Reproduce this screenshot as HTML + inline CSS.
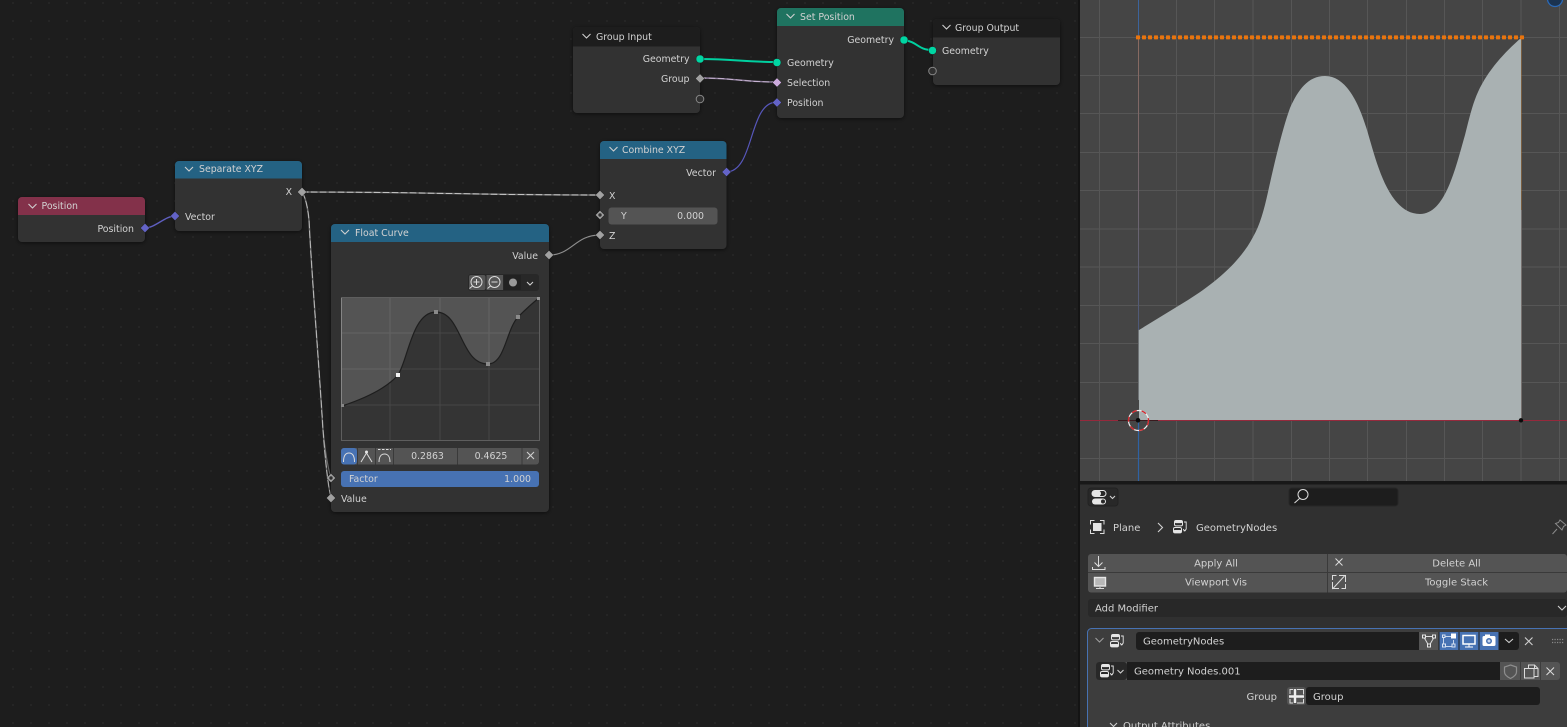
<!DOCTYPE html>
<html><head><meta charset="utf-8"><title>Geometry Nodes</title>
<style>
html,body{margin:0;padding:0;background:#1d1d1d;overflow:hidden;width:1567px;height:727px}
svg{display:block}
text{font-family:"DejaVu Sans","Liberation Sans",sans-serif;font-size:9.4px;fill:#d2d2d2}
.p text{font-size:10px}
.e{text-anchor:end}.m{text-anchor:middle}
.c{fill:none;stroke:#d0d0d0;stroke-width:1.1}
.i{fill:none;stroke:#dcdcdc;stroke-width:1}
.f{fill:#e6e6e6}
</style></head><body>
<svg xmlns="http://www.w3.org/2000/svg" width="1567" height="727" viewBox="0 0 1567 727">
<defs>
<pattern id="dots" x="12" y="2" width="18" height="18" patternUnits="userSpaceOnUse"><rect width="2" height="2" fill="#252525"/></pattern>
<pattern id="org" x="1135.500" y="35" width="6" height="6" patternUnits="userSpaceOnUse"><rect x=".5" y=".4" width="4" height="4" rx=".7" fill="#e8740e"/></pattern>
<linearGradient id="lv" x1="0" y1="37" x2="0" y2="330" gradientUnits="userSpaceOnUse"><stop offset="0" stop-color="#8a6a60"/><stop offset=".6" stop-color="#6f6670"/><stop offset="1" stop-color="#4c5878"/></linearGradient>
<filter id="sh" x="-10%" y="-10%" width="120%" height="120%"><feDropShadow dx="0" dy="1" stdDeviation="2.2" flood-color="#000" flood-opacity=".55"/></filter>
<symbol id="gn" viewBox="0 0 14 14" overflow="visible">
<rect x="1.500" y=".5" width="8" height="5.400" rx="1.500" fill="none" stroke="#e6e6e6"/><rect x="1.500" y=".5" width="8" height="2.600" rx="1.200" fill="#e6e6e6"/>
<rect x=".5" y="7.500" width="8" height="5.400" rx="1.500" fill="none" stroke="#e6e6e6"/><rect x=".5" y="10" width="8" height="3" rx="1.200" fill="#e6e6e6"/>
<path d="M11 2h2.200v7.200l-2 1.600M10.400 9l.8 2 1.600-.4" fill="none" stroke="#e6e6e6" stroke-width=".9"/>
</symbol>
</defs>

<!-- node editor -->
<rect width="1080" height="727" fill="#1d1d1d"/>
<rect width="1080" height="727" fill="url(#dots)"/>

<!-- links behind nodes -->
<g fill="none" stroke-linecap="round">
<path d="M145 228C155 228 165 216 175 216" stroke="#5f5fc0" stroke-width="1.400"/>
<path d="M302 192C420 192 480 195 600 195" stroke="#6a6a6a" stroke-width="1.500"/>
<path d="M302 192C420 192 480 195 600 195" stroke="#cfcfcf" stroke-width=".9" stroke-dasharray="6 3"/>
<path d="M302 192C306 198 308 210 309 220C312 280 318 350 323 430C325 450 328 468 331 478" stroke="#6a6a6a" stroke-width="1.200"/>
<path d="M302 192C306 198 308 210 309 220C312 280 318 350 323 430C325 455 327 480 331 498" stroke="#6a6a6a" stroke-width="1.400"/>
<path d="M302 192C306 198 308 210 309 220C312 280 318 350 323 430C325 455 327 480 331 498" stroke="#c8c8c8" stroke-width=".8" stroke-dasharray="7 3"/>
<path d="M549 255C572 255 575 235 600 235" stroke="#8e8e8e" stroke-width="1.200"/>
<path d="M726 172C755 172 748 102 777 102" stroke="#5757bb" stroke-width="1.200"/>
<path d="M700 59C735 59 742 62 777 62" stroke="#00d0a0" stroke-width="2"/>
<path d="M700 78C735 78 742 82 777 82" stroke="#8a7a98" stroke-width="1.400"/>
<path d="M700 78C735 78 742 82 777 82" stroke="#d4c0de" stroke-width=".8" stroke-dasharray="6 3"/>
<path d="M904 40C918 42 918 50 932 50" stroke="#00d0a0" stroke-width="2"/>
</g>

<!-- Position -->
<g filter="url(#sh)"><rect x="18" y="197" width="127" height="45" rx="4" fill="#303030"/></g>
<path d="M18 215v-14a4 4 0 0 1 4-4h119a4 4 0 0 1 4 4v14z" fill="#83314a"/>
<polyline class="c" points="28.500,204 32.500,208 36.500,204"/>
<text x="41.500" y="209">Position</text>
<text class="e" x="134" y="232">Position</text>

<!-- Separate XYZ -->
<g filter="url(#sh)"><rect x="175" y="161" width="127" height="70" rx="4" fill="#303030"/></g>
<path d="M175 178.500v-13.500a4 4 0 0 1 4-4h119a4 4 0 0 1 4 4v13.500z" fill="#246283"/>
<polyline class="c" points="185,167 189,171 193,167"/>
<text x="199" y="172">Separate XYZ</text>
<text class="e" x="292" y="195">X</text>
<text x="185" y="220">Vector</text>

<!-- Float Curve -->
<g filter="url(#sh)"><rect x="331" y="224" width="218" height="288" rx="4" fill="#303030"/></g>
<path d="M331 242v-14a4 4 0 0 1 4-4h210a4 4 0 0 1 4 4v14z" fill="#246283"/>
<polyline class="c" points="341,230 345,234 349,230"/>
<text x="355" y="236">Float Curve</text>
<text class="e" x="538" y="259">Value</text>

<rect x="468" y="274" width="71" height="17" rx="3" fill="#282828"/>
<rect x="469" y="275" width="16.500" height="15" rx="2" fill="#555"/>
<rect x="486.500" y="275" width="16.500" height="15" fill="#555"/>
<rect x="504" y="275" width="17" height="15" fill="#222"/>
<circle cx="476.500" cy="282" r="5.500" class="i"/><path class="i" d="M473.500 282h6M476.500 279v6M472.500 286l-3 2.500"/>
<circle cx="494.500" cy="282" r="5.500" class="i"/><path class="i" d="M491.500 282h6M490.500 286l-3 2.500"/>
<circle cx="513" cy="282.500" r="4" fill="#9a9a9a"/>
<polyline class="c" points="527,282 530,285 533,282"/>

<!-- graph -->
<rect x="341" y="297" width="199" height="144" fill="#343434"/>
<path d="M342 406C360 400 385 390 398 375C408 360 412 312 436 312C462 312 460 364 488 364C505 364 506 330 518 317C525 310 530 305 539 298V298H342Z" fill="#545454"/>
<path d="M390 298V440M440 298V440M489 298V440M342 333H539M342 369H539M342 405H539" stroke="#fff" stroke-opacity=".09" fill="none"/>
<path d="M342 406C360 400 385 390 398 375C408 360 412 312 436 312C462 312 460 364 488 364C505 364 506 330 518 317C525 310 530 305 539 298" fill="none" stroke="#1e1e1e" stroke-width="1.200"/>
<rect x="341.500" y="297.500" width="198" height="143" fill="none" stroke="#5e5e5e"/>
<path d="M341.500 298V406" stroke="#858585"/>
<rect x="341" y="404" width="3" height="3" fill="#888"/><rect x="396" y="373" width="4" height="4" fill="#f2f2f2"/>
<rect x="434" y="310" width="4" height="4" fill="#8a8a8a"/><rect x="486" y="362" width="4" height="4" fill="#8a8a8a"/>
<rect x="516" y="315" width="4" height="4" fill="#8a8a8a"/><rect x="537" y="297" width="3" height="3" fill="#999"/>

<!-- handles -->
<rect x="341" y="448" width="198" height="16.500" rx="3" fill="#545454"/>
<rect x="341" y="448" width="16" height="16.500" rx="3" fill="#4772b3"/>
<path d="M357.500 448v16.500M375.500 448v16.500M393.500 448v16.500M457.500 448v16.500M522 448v16.500" stroke="#3a3a3a"/>
<path class="i" d="M343.500 462c0-6 2-9 5.500-9s5.500 3 5.500 9"/>
<path class="i" d="M361 462l5.500-9 5.500 9"/><circle cx="366.500" cy="452" r="1.500" class="f"/>
<path class="i" d="M379 462c0-5 2-8 5.500-8s5.500 3 5.500 8"/><path class="i" d="M378 449.500h13" stroke-dasharray="2.500 1.500"/>
<text class="m" x="427.500" y="459">0.2863</text>
<text class="m" x="491" y="459">0.4625</text>
<path d="M527 452l7 7M534 452l-7 7" stroke="#cfcfcf" stroke-width="1.100"/>

<rect x="341" y="471" width="198" height="16" rx="3" fill="#4772b3"/>
<text x="349" y="482">Factor</text>
<text class="e" x="531" y="482">1.000</text>
<text x="341" y="502">Value</text>

<!-- Combine XYZ -->
<g filter="url(#sh)"><rect x="600" y="141" width="126.500" height="108" rx="4" fill="#303030"/></g>
<path d="M600 159v-14a4 4 0 0 1 4-4h118.500a4 4 0 0 1 4 4v14z" fill="#246283"/>
<polyline class="c" points="609.500,147 613.500,151 617.500,147"/>
<text x="622" y="153">Combine XYZ</text>
<text class="e" x="716" y="176">Vector</text>
<text x="609" y="199">X</text>
<rect x="608.500" y="207.500" width="109" height="17" rx="3" fill="#545454"/>
<text x="621" y="219">Y</text>
<text class="e" x="704" y="219">0.000</text>
<text x="609" y="239">Z</text>

<!-- Group Input -->
<g filter="url(#sh)"><rect x="573" y="27" width="127" height="86" rx="4" fill="#303030"/></g>
<path d="M573 46.500v-15.500a4 4 0 0 1 4-4h119a4 4 0 0 1 4 4v15.500z" fill="#1d1d1d"/>
<polyline class="c" points="582.500,34 586.500,38 590.500,34"/>
<text x="596" y="40">Group Input</text>
<text class="e" x="689.500" y="62">Geometry</text>
<text class="e" x="689.500" y="82">Group</text>

<!-- Set Position -->
<g filter="url(#sh)"><rect x="777" y="8" width="127" height="110" rx="4" fill="#303030"/></g>
<path d="M777 26v-14a4 4 0 0 1 4-4h119a4 4 0 0 1 4 4v14z" fill="#1f7360"/>
<polyline class="c" points="786.500,14 790.500,18 794.500,14"/>
<text x="800" y="20">Set Position</text>
<text class="e" x="894" y="43">Geometry</text>
<text x="787" y="66">Geometry</text>
<text x="787" y="86">Selection</text>
<text x="787" y="106">Position</text>

<!-- Group Output -->
<g filter="url(#sh)"><rect x="933" y="19" width="127" height="66" rx="4" fill="#303030"/></g>
<path d="M933 37.500v-14.500a4 4 0 0 1 4-4h119a4 4 0 0 1 4 4v14.500z" fill="#1d1d1d"/>
<polyline class="c" points="942.500,25 946.500,29 950.500,25"/>
<text x="955" y="31">Group Output</text>
<text x="942" y="54">Geometry</text>

<!-- sockets -->
<g stroke="#222" stroke-width=".5">
<polygon points="145,223.400 149.600,228 145,232.600 140.400,228" fill="#6363c7"/>
<polygon points="175,211.400 179.600,216 175,220.600 170.400,216" fill="#6363c7"/>
<polygon points="302,187.400 306.600,192 302,196.600 297.400,192" fill="#a1a1a1"/>
<polygon points="549,250.400 553.600,255 549,259.600 544.400,255" fill="#a1a1a1"/>
<polygon points="331,473.400 335.600,478 331,482.600 326.400,478" fill="#a1a1a1"/>
<polygon points="331,493.400 335.600,498 331,502.600 326.400,498" fill="#a1a1a1"/>
<polygon points="600,190.400 604.600,195 600,199.600 595.400,195" fill="#a1a1a1"/>
<polygon points="600,210.400 604.600,215 600,219.600 595.400,215" fill="#a1a1a1"/>
<polygon points="600,230.400 604.600,235 600,239.600 595.400,235" fill="#a1a1a1"/>
<polygon points="726.500,167.400 731.100,172 726.500,176.600 721.900,172" fill="#6363c7"/>
<polygon points="700,73.900 704.600,78.500 700,83.100 695.400,78.500" fill="#a1a1a1"/>
<polygon points="777,77.900 781.600,82.500 777,87.100 772.400,82.500" fill="#ccaadd"/>
<polygon points="777,97.900 781.600,102.500 777,107.100 772.400,102.500" fill="#6363c7"/>
<circle cx="700" cy="59" r="4" fill="#00d6a3"/>
<circle cx="777" cy="62.500" r="4" fill="#00d6a3"/>
<circle cx="904" cy="40" r="4" fill="#00d6a3"/>
<circle cx="932.500" cy="50.500" r="4" fill="#00d6a3"/>
</g>
<circle cx="331" cy="478" r="1.700" fill="#303030"/><circle cx="600" cy="215" r="1.700" fill="#303030"/>
<circle cx="700" cy="99" r="3.800" fill="#303030" stroke="#888" stroke-width="1"/>
<circle cx="932.500" cy="71" r="3.800" fill="#303030" stroke="#888" stroke-width="1"/>

<!-- viewport -->
<rect x="1078" y="0" width="2" height="727" fill="#141414"/>
<rect x="1080" y="0" width="487" height="481" fill="#454545"/>
<path d="M1099.500 0V481M1176.500 0V481M1214.500 0V481M1253 0V481M1291.500 0V481M1329.500 0V481M1367.500 0V481M1406.500 0V481M1444.500 0V481M1482.500 0V481M1521 0V481M1559.500 0V481M1080 37.500H1567M1080 75.500H1567M1080 113.500H1567M1080 152.500H1567M1080 190.500H1567M1080 229H1567M1080 267H1567M1080 305.500H1567M1080 343.500H1567M1080 382.500H1567M1080 458.500H1567" stroke="#565656" fill="none"/>
<path d="M1138.500 0V37" stroke="#3c649c" fill="none"/>
<rect x="1138" y="37" width="1" height="293" fill="url(#lv)"/>
<path d="M1138.500 420V481" stroke="#2f62a4" stroke-width="1.200" fill="none"/>
<path d="M1521 37V210" stroke="#b0763a" fill="none"/>
<path d="M1080 420.500H1567" stroke="#96293c" fill="none"/>
<path d="M1139 330L1188 300C1215 283 1240 262 1253 237C1260 225 1264 210 1268 192C1274 165 1282 130 1290 108C1298 90 1308 76 1325 76C1345 76 1358 100 1367 130C1376 160 1388 214 1420 214C1445 214 1455 170 1465 135C1470 115 1473 103 1478 92C1488 70 1505 52 1521 38V420H1139Z" fill="#a9b1b2"/>
<path d="M1138.500 330V400" stroke="#6f7376" fill="none"/>
<path d="M1521.500 210V420" stroke="#76706e" fill="none"/>
<rect x="1135.500" y="35" width="390" height="5" fill="url(#org)"/>
<path d="M1118 420.500H1158" stroke="#3a1a1e" fill="none"/>
<circle cx="1138.500" cy="420.500" r="10" fill="none" stroke="#f0f0f0" stroke-width="1.200"/>
<circle cx="1138.500" cy="420.500" r="10" fill="none" stroke="#d8232a" stroke-width="1.300" stroke-dasharray="5 5"/>
<circle cx="1138" cy="420.300" r="2.300" fill="#0a0a0a"/>
<circle cx="1521" cy="420.300" r="2.200" fill="#0a0a0a"/>
<circle cx="1555" cy="-1" r="7.500" fill="#1b3350" stroke="#2b6ab8" stroke-width="1.200"/>

<!-- properties -->
<g class="p">
<rect x="1080" y="481" width="487" height="246" fill="#303030"/>
<rect x="1080" y="481" width="487" height="3.500" fill="#181818"/>
<rect x="1088" y="488" width="30" height="18" rx="3" fill="#282828" stroke="#222"/>
<rect x="1092" y="490.500" width="14" height="6" rx="3" fill="none" stroke="#e6e6e6"/><rect x="1092" y="490.500" width="9" height="6" rx="3" fill="#e6e6e6"/>
<rect x="1092" y="498.500" width="14" height="6" rx="3" fill="#e6e6e6"/><rect x="1101" y="499.500" width="4" height="4" rx="2" fill="#282828"/>
<polyline class="c" points="1110,496 1112.500,498.500 1115,496"/>
<rect x="1289" y="488" width="109" height="18" rx="3" fill="#1d1d1d" stroke="#262626"/>
<circle cx="1303" cy="494.500" r="5" class="i"/><path class="i" d="M1299.500 498.500l-5 4.500"/>

<path class="i" stroke="#bbb" d="M1090.500 524.500v-4h4M1100 520.500h4v4M1104 529.500v4h-4M1094.500 533.500h-4v-4"/>
<rect x="1093" y="523" width="8.500" height="8" fill="#e6e6e6"/>
<text x="1113" y="531">Plane</text>
<polyline class="c" points="1158,523 1162.500,527.500 1158,532"/>
<use href="#gn" x="1173" y="520" width="14" height="14"/>
<text x="1196" y="531">GeometryNodes</text>
<path d="M1552.500 534l4.500-5M1560 520l6 5-2.500 1.500-1.500 3.500-6.500-6.500 3-1z" fill="none" stroke="#8a8a8a"/>

<rect x="1088" y="554" width="479" height="38.500" rx="3" fill="#545454"/>
<path d="M1088 572.500H1567" stroke="#3a3a3a"/>
<path d="M1327.500 554V592.500" stroke="#3a3a3a"/>
<path class="i" d="M1098.500 556v10M1094.500 562.500l4 4 4-4M1092.500 567v2.500h12.500V567"/>
<text class="m" x="1216" y="566.500">Apply All</text>
<path class="i" d="M1335.500 558.500l7 7M1342.500 558.500l-7 7"/>
<text class="m" x="1456.500" y="566.500">Delete All</text>
<rect x="1094.500" y="577.500" width="11" height="8.500" fill="#b8b8b8" stroke="#e6e6e6" stroke-width="1.400"/>
<path class="i" d="M1100 587v1.500M1096 588.500h8"/>
<text class="m" x="1216" y="585.500">Viewport Vis</text>
<path class="i" d="M1332.500 589l12-13M1339 575.500h6.500v6.500M1332.500 582v6.500h6.500M1345.500 584v4.500h-4M1332.500 580v-4.500h4"/>
<text class="m" x="1456.500" y="585.500">Toggle Stack</text>

<rect x="1088" y="599" width="479" height="18" rx="3" fill="#282828"/>
<text x="1095" y="611.500">Add Modifier</text>
<polyline class="c" points="1558,606 1562,610 1566,606"/>

<!-- modifier panel -->
<rect x="1087.500" y="628.500" width="490" height="110" rx="4" fill="#3d3d3d" stroke="#4772b3"/>
<polyline fill="none" stroke="#a0a0a0" stroke-width="1" points="1095.500,638 1099.500,642 1103.500,638"/>
<use href="#gn" x="1110" y="634" width="14" height="14"/>
<rect x="1136" y="632" width="383" height="18" rx="3" fill="#1d1d1d"/>
<text x="1143" y="644.500">GeometryNodes</text>
<rect x="1419" y="632" width="19.500" height="18" fill="#545454"/>
<rect x="1439.500" y="632" width="19" height="18" fill="#4772b3"/>
<rect x="1459.500" y="632" width="19" height="18" fill="#4772b3"/>
<rect x="1479.500" y="632" width="19" height="18" fill="#4772b3"/>
<path class="i" d="M1423.500 636.500h11l-5.500 9.500z"/>
<rect x="1422.500" y="635" width="3" height="3" fill="#545454" stroke="#e6e6e6"/><rect x="1432.500" y="635" width="3" height="3" fill="#545454" stroke="#e6e6e6"/><rect x="1427.500" y="644" width="3" height="3" fill="#545454" stroke="#e6e6e6"/>
<path d="M1444 636.500h7M1443.500 637v8M1453.500 640v5M1445 646.500h7" stroke="#c8d6ec" fill="none"/>
<rect x="1451" y="633.500" width="5" height="5" fill="#fff"/>
<rect x="1442.500" y="635" width="2.500" height="2.500" fill="#4772b3" stroke="#d8e2f2"/>
<rect x="1442.500" y="644" width="3" height="3" fill="#4772b3" stroke="#d8e2f2"/><rect x="1452" y="644" width="3" height="3" fill="#4772b3" stroke="#d8e2f2"/>
<rect x="1463" y="635.500" width="12" height="8.500" fill="#4772b3" stroke="#fff" stroke-width="1.500"/>
<path d="M1469 644.500v2M1465 647h8" stroke="#fff"/>
<rect x="1482.500" y="636" width="13" height="10" rx="1.500" fill="#fff"/><rect x="1485" y="634.500" width="5" height="2" fill="#fff"/>
<circle cx="1489" cy="641" r="3.300" fill="#4772b3" stroke="#fff" stroke-width=".6"/><circle cx="1489" cy="641" r="1.500" fill="#c4d4ee"/>
<polyline class="c" points="1505,639 1509,642.500 1513,639"/>
<path d="M1525 637.500l7.500 7.500M1532.500 637.500l-7.500 7.500" stroke="#d0d0d0" stroke-width="1.100"/>
<path d="M1552 639.500h12M1552 642.500h12" stroke="#8a8a8a" stroke-dasharray="1.200 1.300" stroke-width="1.200"/>

<rect x="1096" y="662" width="464" height="18" rx="3" fill="#545454"/>
<rect x="1096" y="662" width="31" height="18" rx="3" fill="#282828"/>
<use href="#gn" x="1100" y="664" width="14" height="14"/>
<polyline class="c" points="1117.500,670 1120.500,673 1123.500,670"/>
<rect x="1127" y="662" width="373" height="18" fill="#1d1d1d"/>
<text x="1134" y="674.500">Geometry Nodes.001</text>
<path d="M1520.500 662V680M1540.500 662V680" stroke="#3d3d3d"/>
<path d="M1510.500 665l6 2v5c0 3-3 5-6 6.500-3-1.500-6-3.500-6-6.500v-5z" fill="none" stroke="#8e8e8e" stroke-width="1.200"/>
<path class="i" d="M1528.500 668.500v-3.500h6l3.500 3.500v8h-4M1524.500 668.500h9.500v9.500h-9.500zM1534.500 665v3.500h3.500"/>
<path class="i" d="M1546.500 667.500l7.500 7.500M1554 667.500l-7.500 7.500"/>

<text class="e" x="1277" y="700">Group</text>
<rect x="1287" y="687" width="19" height="18" rx="3" fill="#545454"/>
<rect x="1306" y="687" width="234" height="18" rx="3" fill="#1d1d1d"/>
<path d="M1295 689v14M1289 696.500h15" stroke="#f0f0f0" stroke-width="2.400"/>
<path d="M1290 694v-4.500h3M1297 689.500h6.500v5M1290 699v4h3M1297 703h6.500v-4" fill="none" stroke="#ddd"/>
<text x="1313" y="700">Group</text>
<polyline class="c" points="1110,723 1113.500,726.500 1117,723"/>
<text x="1123" y="729">Output Attributes</text>
</g>
</svg>
</body></html>
